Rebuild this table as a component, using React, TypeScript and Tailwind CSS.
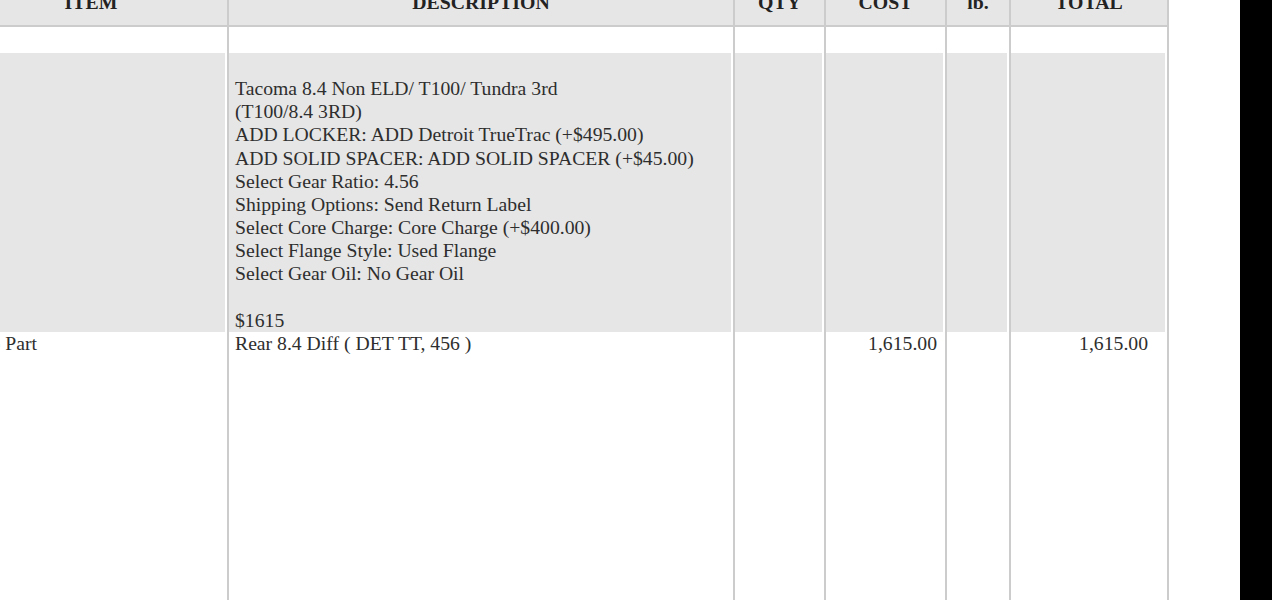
const cols = [
  { head: "ITEM", w: "w-[274px]" },
  { head: "DESCRIPTION", w: "w-[506px]" },
  { head: "QTY", w: "w-[91px]" },
  { head: "COST", w: "w-[121px]" },
  { head: "lb.", w: "w-[64px]" },
  { head: "TOTAL", w: "w-[158px]" },
];

const options = [
  "Tacoma 8.4 Non ELD/ T100/ Tundra 3rd",
  "(T100/8.4 3RD)",
  "ADD LOCKER: ADD Detroit TrueTrac (+$495.00)",
  "ADD SOLID SPACER: ADD SOLID SPACER (+$45.00)",
  "Select Gear Ratio: 4.56",
  "Shipping Options: Send Return Label",
  "Select Core Charge: Core Charge (+$400.00)",
  "Select Flange Style: Used Flange",
  "Select Gear Oil: No Gear Oil",
];

const Cell = ({
  w,
  className = "",
  children,
}: {
  w: string;
  className?: string;
  children?: React.ReactNode;
}) => (
  <div className={`${w} shrink-0 border-r-2 border-[#cccccc] ${className}`}>
    {children}
  </div>
);

export default function App() {
  return (
    <div
      className="flex h-[600px] w-[1272px] overflow-hidden bg-white text-[19.7px] leading-[23.15px] text-[#2e2e2e]"
      style={{ fontFamily: "'Liberation Serif', 'Times New Roman', serif" }}
    >
      <div className="w-[1240px] shrink-0 overflow-hidden">
        <div className="-ml-[45px] w-[1214px]">
          {/* header */}
          <div className="-mt-[21px] flex border-b-2 border-[#cccccc] bg-[#e6e6e6]">
            {cols.map((c) => (
              <Cell
                key={c.head}
                w={c.w}
                className="flex h-[46px] items-center justify-center pt-[2px] text-[19.8px] font-bold text-[#222222]"
              >
                {c.head}
              </Cell>
            ))}
          </div>

          {/* spacer row */}
          <div className="flex">
            {cols.map((c) => (
              <Cell key={c.head} w={c.w} className="h-[26px]" />
            ))}
          </div>

          {/* options row */}
          <div className="flex">
            {cols.map((c, i) => (
              <Cell
                key={c.head}
                w={c.w}
                className="h-[279px] bg-[#e6e6e6] shadow-[inset_-2px_0_0_#ffffff]"
              >
                {i === 1 && (
                  <div className="pl-[6px] pt-[1px]">
                    <div>&nbsp;</div>
                    {options.map((o) => (
                      <div key={o}>{o}</div>
                    ))}
                    <div>&nbsp;</div>
                    <div>$1615</div>
                  </div>
                )}
              </Cell>
            ))}
          </div>

          {/* item row */}
          <div className="flex">
            <Cell w={cols[0].w} className="h-[300px] pl-[6px]">
              Auto Part
            </Cell>
            <Cell w={cols[1].w} className="pl-[6px]">
              Rear 8.4 Diff ( DET TT, 456 )
            </Cell>
            <Cell w={cols[2].w} />
            <Cell w={cols[3].w} className="pr-[8px] text-right">
              1,615.00
            </Cell>
            <Cell w={cols[4].w} />
            <Cell w={cols[5].w} className="pr-[19px] text-right">
              1,615.00
            </Cell>
          </div>
        </div>
      </div>
      <div className="flex-1 bg-black" />
    </div>
  );
}
